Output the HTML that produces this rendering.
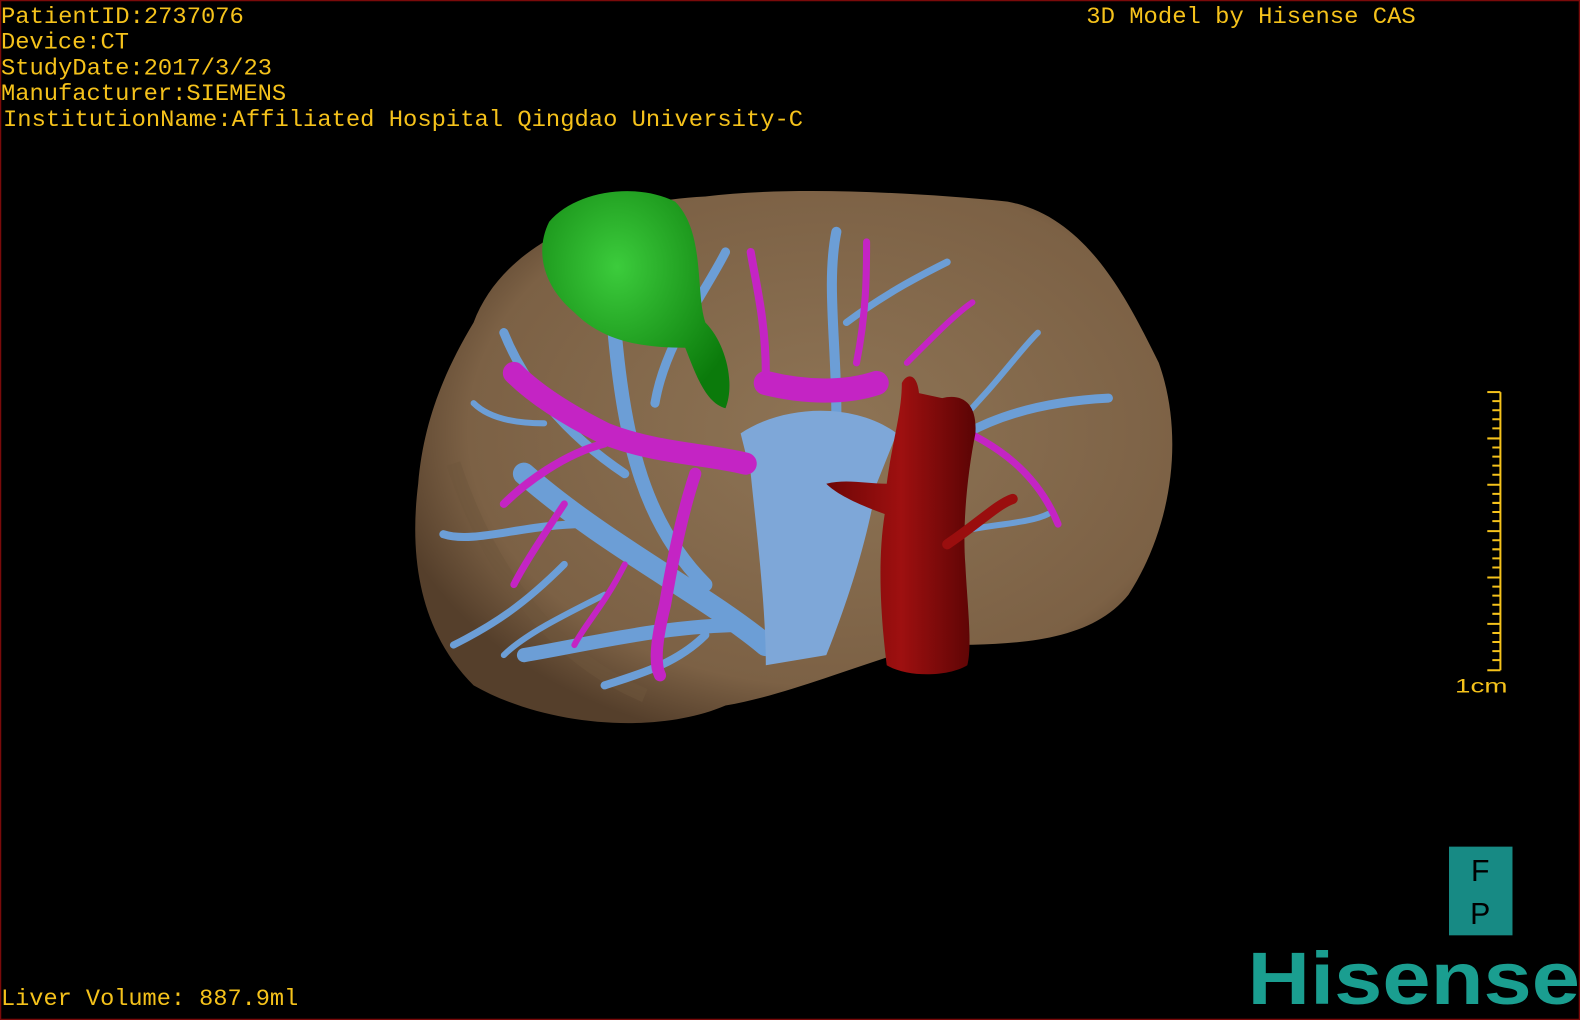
<!DOCTYPE html>
<html><head><style>html,body{margin:0;padding:0;background:#000;width:1580px;height:1020px;overflow:hidden}</style></head>
<body>
<svg width="1580" height="1020" viewBox="0 0 1568 1012" preserveAspectRatio="none" xmlns="http://www.w3.org/2000/svg" style="display:block">
<defs>
<radialGradient id="lv" cx="0.55" cy="0.45" r="0.6">
<stop offset="0" stop-color="#8e7455"/><stop offset="0.8" stop-color="#7c6145"/><stop offset="1" stop-color="#553f2b"/>
</radialGradient>
<radialGradient id="gb" cx="0.4" cy="0.35" r="0.7"><stop offset="0" stop-color="#3ccc3c"/><stop offset="1" stop-color="#0b7a0b"/></radialGradient>
<linearGradient id="ivc" x1="0" x2="1"><stop offset="0" stop-color="#6e0606"/><stop offset="0.5" stop-color="#9e1010"/><stop offset="1" stop-color="#5a0404"/></linearGradient>
</defs>
<rect x="0.5" y="0.5" width="1567" height="1011" fill="#000" stroke="#7a0a0a" stroke-width="1.5"/>
<path d="M470,320 C500,240 600,200 700,195 C780,185 900,190 1000,200 C1080,215 1120,300 1150,360 C1175,430 1165,520 1120,590 C1080,640 1000,640 920,640 C850,660 780,690 720,700 C650,730 540,720 470,680 C420,630 405,560 415,480 C420,420 440,370 470,320 Z" fill="url(#lv)"/>
<path d="M450,460 C470,520 520,640 640,690" stroke="#6e563c" stroke-width="14" fill="none" opacity="0.5"/>
<g stroke="#6c9ed6" fill="none" stroke-linecap="round">
<path d="M760,640 C700,590 600,540 520,470" stroke-width="22"/>
<path d="M740,620 C660,620 580,640 520,650" stroke-width="14"/>
<path d="M700,580 C640,520 620,440 610,330" stroke-width="14"/>
<path d="M620,470 C560,430 520,380 500,330" stroke-width="9"/>
<path d="M580,520 C520,520 470,540 440,530" stroke-width="8"/>
<path d="M560,560 C520,600 490,620 450,640" stroke-width="7"/>
<path d="M650,400 C660,340 700,290 720,250" stroke-width="9"/>
<path d="M830,410 C830,340 820,280 830,230" stroke-width="10"/>
<path d="M840,320 C880,290 920,270 940,260" stroke-width="7"/>
<path d="M900,470 C950,430 1000,400 1100,395" stroke-width="9"/>
<path d="M950,420 C990,380 1010,350 1030,330" stroke-width="6"/>
<path d="M940,530 C980,520 1020,520 1040,510" stroke-width="6"/>
<path d="M700,630 C670,660 630,670 600,680" stroke-width="8"/>
<path d="M540,420 C500,420 480,410 470,400" stroke-width="6"/>
<path d="M600,590 C560,610 520,630 500,650" stroke-width="6"/>
</g>
<path d="M735,430 C780,400 850,400 890,430 L870,480 C860,540 840,600 820,650 L760,660 C760,600 750,520 745,470 Z" fill="#7ea7d8"/>
<g stroke="#c424c4" fill="none" stroke-linecap="round">
<path d="M740,460 C700,450 650,450 600,430 C560,410 530,390 510,370" stroke-width="22"/>
<path d="M870,380 C840,390 800,390 760,380" stroke-width="24"/>
<path d="M690,470 C680,500 670,540 660,600 C650,640 650,660 655,670" stroke-width="12"/>
<path d="M600,440 C560,450 520,480 500,500" stroke-width="8"/>
<path d="M760,370 C760,320 750,280 745,250" stroke-width="8"/>
<path d="M850,360 C860,310 860,270 860,240" stroke-width="7"/>
<path d="M900,360 C930,330 950,310 965,300" stroke-width="6"/>
<path d="M940,420 C990,440 1030,470 1050,520" stroke-width="7"/>
<path d="M560,500 C540,530 520,560 510,580" stroke-width="7"/>
<path d="M620,560 C600,600 580,620 570,640" stroke-width="6"/>
<path d="M700,350 C690,320 670,300 660,290" stroke-width="6"/>
</g>
<path d="M545,220 C570,190 630,180 670,200 C700,230 690,290 700,320 C720,340 730,380 720,405 C700,400 690,370 680,345 C640,345 600,340 570,310 C540,285 530,250 545,220 Z" fill="url(#gb)"/>
<path d="M895,380 C900,370 910,370 912,390 L935,395 C955,390 970,400 968,430 C960,470 955,520 958,560 C960,600 965,640 960,660 C940,672 900,672 880,660 C875,620 870,560 878,510 C850,500 830,490 820,480 C840,475 860,480 880,480 C885,440 895,410 895,380 Z" fill="url(#ivc)"/>
<path d="M940,540 C970,520 990,500 1005,495" stroke="#9a0e0e" stroke-width="10" fill="none" stroke-linecap="round"/>
<g font-family="Liberation Mono, monospace" font-size="23" fill="#f5c21b">
<text x="1" y="23" textLength="241" lengthAdjust="spacingAndGlyphs">PatientID:2737076</text>
<text x="1" y="48" textLength="127" lengthAdjust="spacingAndGlyphs">Device:CT</text>
<text x="1" y="74" textLength="269" lengthAdjust="spacingAndGlyphs">StudyDate:2017/3/23</text>
<text x="1" y="99" textLength="283" lengthAdjust="spacingAndGlyphs">Manufacturer:SIEMENS</text>
<text x="3" y="125" textLength="794" lengthAdjust="spacingAndGlyphs">InstitutionName:Affiliated Hospital Qingdao University-C</text>
<text x="1078" y="23" textLength="327" lengthAdjust="spacingAndGlyphs">3D Model by Hisense CAS</text>
<text x="1" y="997" textLength="295" lengthAdjust="spacingAndGlyphs">Liver Volume: 887.9ml</text>
</g>
<g stroke="#f5c21b" stroke-width="2">
<line x1="1489" y1="389" x2="1489" y2="665"/>
<line x1="1476" y1="389" x2="1489" y2="389"/>
<line x1="1476" y1="665" x2="1489" y2="665"/>
<path d="M1481,398H1489M1481,407H1489M1481,416H1489M1481,425H1489M1476,435H1489M1481,444H1489M1481,453H1489M1481,462H1489M1481,471H1489M1476,481H1489M1481,490H1489M1481,499H1489M1481,508H1489M1481,517H1489M1476,527H1489M1481,536H1489M1481,545H1489M1481,554H1489M1481,563H1489M1476,573H1489M1481,582H1489M1481,591H1489M1481,600H1489M1481,609H1489M1476,619H1489M1481,628H1489M1481,637H1489M1481,646H1489M1481,655H1489"/>
</g>
<text x="1444" y="687" font-family="Liberation Sans, sans-serif" font-size="19" fill="#f5c21b" textLength="52" lengthAdjust="spacingAndGlyphs">1cm</text>
<rect x="1438" y="840" width="63" height="88" fill="#178a84"/>
<text x="1469" y="874" text-anchor="middle" font-family="Liberation Sans, sans-serif" font-size="30" fill="#000">F</text>
<text x="1469" y="917" text-anchor="middle" font-family="Liberation Sans, sans-serif" font-size="30" fill="#000">P</text>
<text x="1238" y="996" font-family="Liberation Sans, sans-serif" font-weight="bold" font-size="74" fill="#1a9e90" textLength="330" lengthAdjust="spacingAndGlyphs">Hisense</text>
</svg>
</body></html>
